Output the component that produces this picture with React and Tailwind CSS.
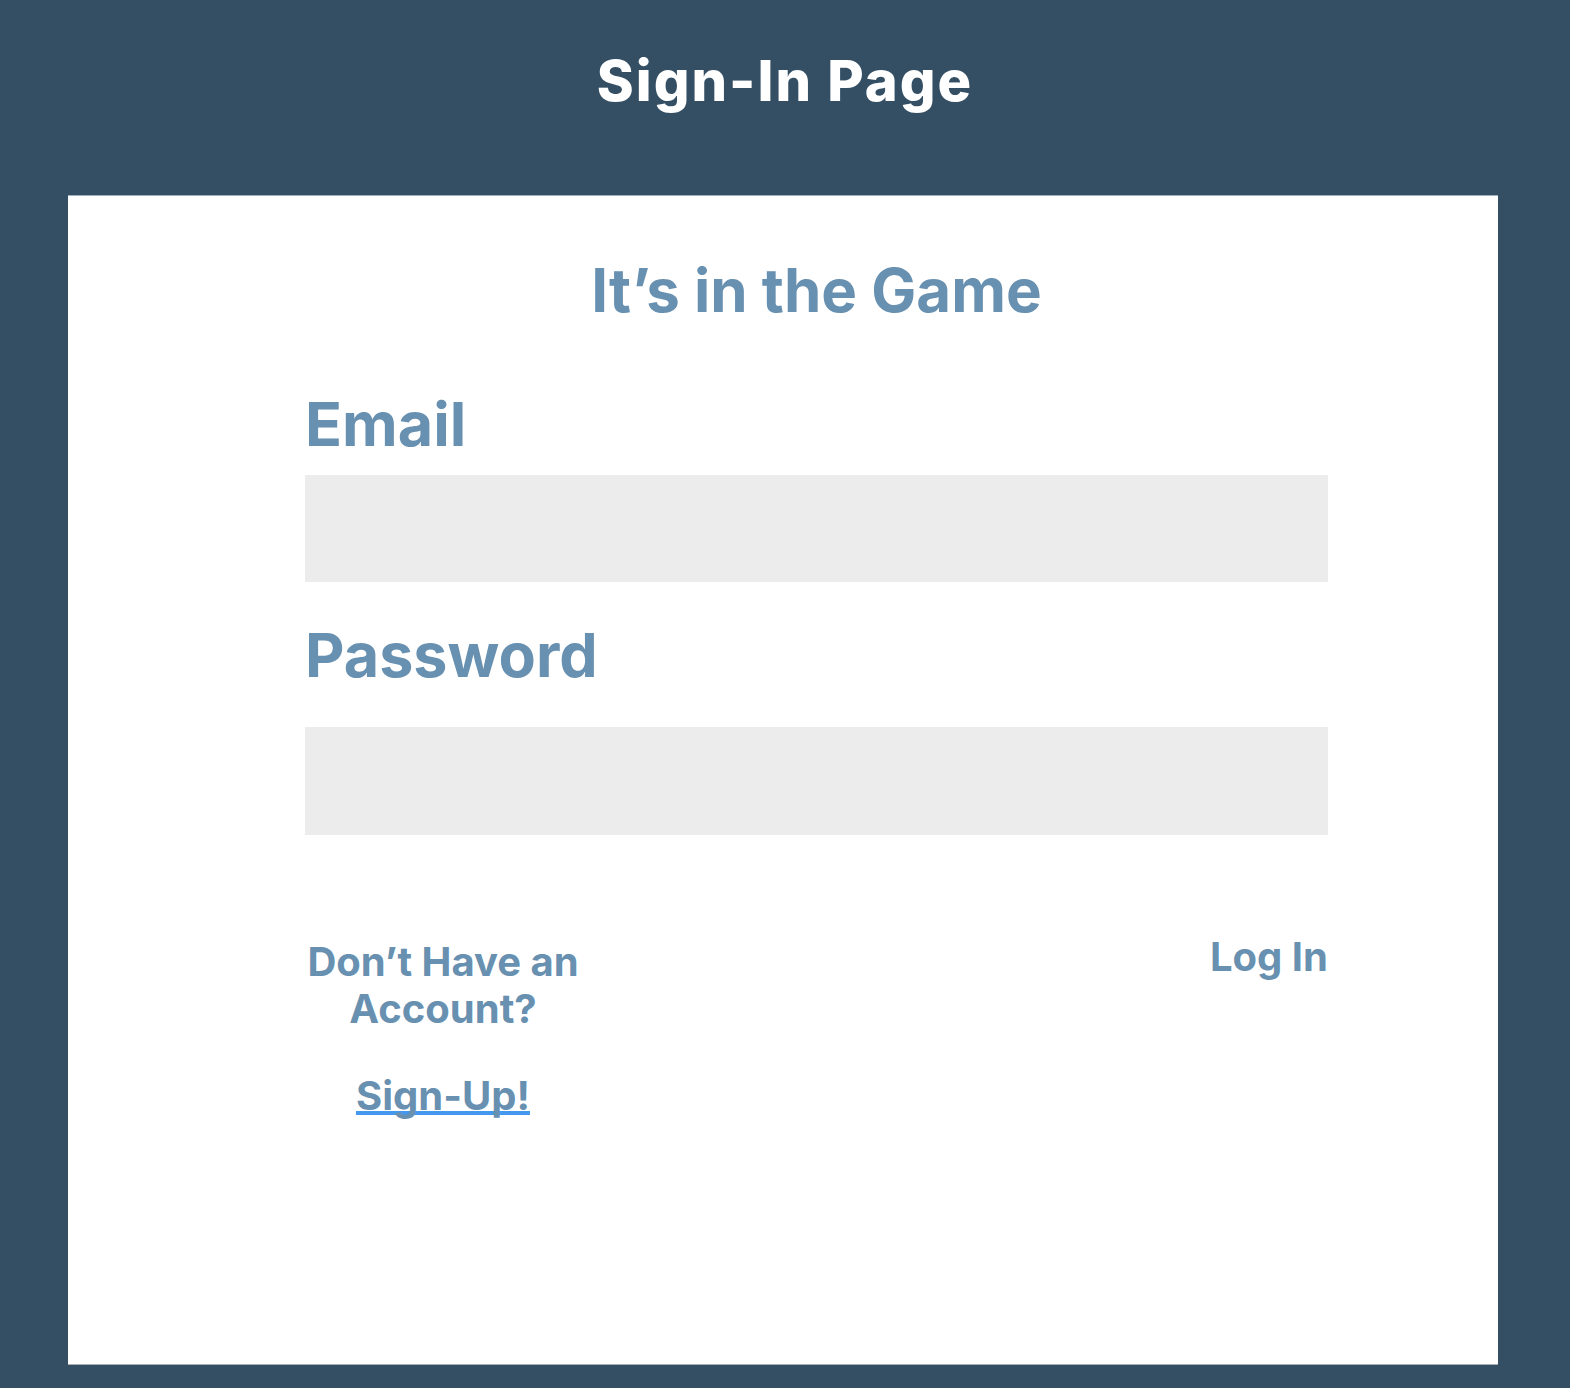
import React from 'react';

const blue = 'text-[#6890b0]';

const Field = ({ label, className = '' }) => (
    <div className={className}>
        <label className={`block ${blue} text-[61px] leading-[72px] font-bold`}>{label}</label>
    </div>
);

export default function App() {
    return (
        <div className="min-h-[1388px] bg-[#344f64] pb-[23px] font-['Inter','Noto_Sans',sans-serif]">
            <header className="h-[195px] pt-[48px] text-center">
                <h1 className="text-white text-[56px] leading-[67px] font-extrabold tracking-[2px]">Sign-In Page</h1>
            </header>

            <main className="ml-[68px] mr-[72px] h-[1170px] bg-white border-t border-[#9fb0be] border-b border-b-[#a7adb3] pl-[237px] pr-[170px] pt-[58px]">
                <h2 className={`text-center ${blue} text-[60px] leading-[72px] font-bold`}>It’s in the Game</h2>

                <Field label="Email" className="mt-[62px]" />
                <input type="email" className="mt-[15px] block w-full h-[107px] bg-[#ececec] outline-none" />

                <Field label="Password" className="mt-[37px]" />
                <input type="password" className="mt-[36px] block w-full h-[108px] bg-[#ececec] outline-none" />

                <div className="mt-[98px] flex justify-between items-start">
                    <div className="w-[276px] pt-[5px] flex flex-col items-center text-center">
                        <p className={`${blue} text-[40px] leading-[47px] font-bold whitespace-nowrap`}>Don’t Have an<br />Account?</p>
                        <a href="#" className={`mt-[40px] ${blue} text-[40px] leading-[47px] font-bold underline decoration-[#4499ee] decoration-4 underline-offset-[1px] [text-decoration-skip-ink:none]`}>Sign-Up!</a>
                    </div>
                    <button className={`${blue} text-[40px] leading-[47px] font-bold`}>Log In</button>
                </div>
            </main>
        </div>
    );
}
